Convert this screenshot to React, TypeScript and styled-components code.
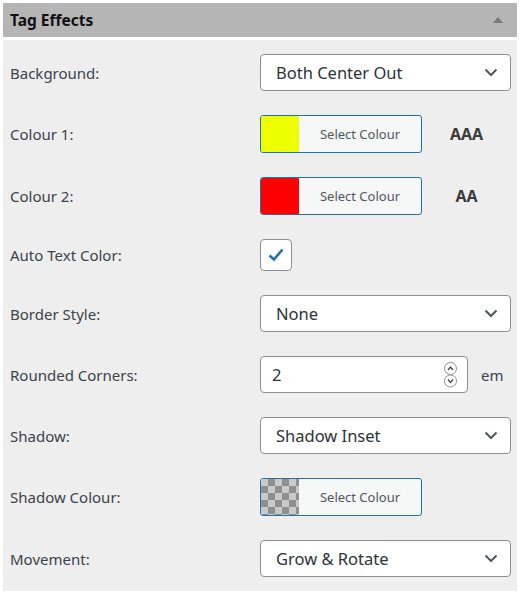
import React from 'react';
import styled, { createGlobalStyle } from 'styled-components';

const GlobalStyle = createGlobalStyle`
  html, body {
    margin: 0;
    padding: 0;
    background: #ffffff;
  }
  body {
    font-family: "Noto Sans", "Open Sans", sans-serif;
    color: #3c434a;
  }
`;

// Panel
const Panel = styled.div`
  width: 514px;
  margin: 3px 0 0 3px;
`;

const PanelHeader = styled.div`
  height: 34px;
  background: #b5b5b5;
  display: flex;
  align-items: center;
  justify-content: space-between;
  padding: 0 14px 0 7px;
  margin-bottom: 3px;
`;

const PanelTitle = styled.h2`
  margin: 0;
  font-size: 15.5px;
  font-weight: 700;
  color: #111111;
`;

const Toggle = styled.span`
  width: 0;
  height: 0;
  border-left: 5px solid transparent;
  border-right: 5px solid transparent;
  border-bottom: 6px solid #7a7a7a;
`;

const PanelBody = styled.div`
  background: #eeeeee;
  padding: 2px 6px 2px 7px;
`;

// Rows
const Row = styled.div`
  display: grid;
  grid-template-columns: 250px 1fr;
  align-items: center;
  padding: 12px 0;
`;

const Label = styled.label`
  font-size: 15px;
  line-height: 20px;
  color: #3c434a;
`;

const Control = styled.div`
  display: flex;
  align-items: center;
`;

// Select
const SelectBox = styled.div`
  flex: 1;
  height: 37px;
  box-sizing: border-box;
  background: #ffffff;
  border: 1px solid #8c8f94;
  border-radius: 4px;
  display: flex;
  align-items: center;
  justify-content: space-between;
  padding: 0 12px 0 15px;
  font-size: 16.5px;
  color: #2c3338;
`;

const Chevron = () => (
  <svg width="14" height="9" viewBox="0 0 14 9" fill="none">
    <path d="M1.5 1.5L7 7L12.5 1.5" stroke="#50575e" strokeWidth="2" />
  </svg>
);

const Select = ({ value }: { value: string }) => (
  <SelectBox>
    <span>{value}</span>
    <Chevron />
  </SelectBox>
);

// Colour picker
const ColourButton = styled.div`
  width: 162px;
  height: 38px;
  box-sizing: border-box;
  border: 1px solid #2271b1;
  border-radius: 3px;
  background: #f6f7f7;
  display: flex;
  overflow: hidden;
`;

const Swatch = styled.span<{ $colour?: string }>`
  width: 38px;
  flex-shrink: 0;
  background: ${p => p.$colour ?? 'transparent'};
  ${p =>
    !p.$colour &&
    `
    background-color: #c9c9c9;
    background-image:
      linear-gradient(45deg, #8f8f8f 25%, transparent 25%, transparent 75%, #8f8f8f 75%),
      linear-gradient(45deg, #8f8f8f 25%, transparent 25%, transparent 75%, #8f8f8f 75%);
    background-size: 14px 14px;
    background-position: 0 0, 7px 7px;
  `}
`;

const ColourText = styled.span`
  flex: 1;
  display: flex;
  align-items: center;
  justify-content: center;
  font-size: 13px;
  color: #50575e;
`;

const Contrast = styled.span`
  flex: 1;
  text-align: center;
  font-size: 16px;
  font-weight: 700;
  color: #3c3c3c;
`;

// Checkbox
const CheckBox = styled.span`
  width: 32px;
  height: 32px;
  box-sizing: border-box;
  background: #ffffff;
  border: 1px solid #8c8f94;
  border-radius: 4px;
  display: flex;
  align-items: center;
  justify-content: center;
`;

// Number input
const NumberBox = styled.div`
  width: 208px;
  height: 37px;
  box-sizing: border-box;
  background: #ffffff;
  border: 1px solid #8c8f94;
  border-radius: 4px;
  display: flex;
  align-items: center;
  justify-content: space-between;
  padding: 0 10px 0 11px;
  font-size: 16.5px;
  color: #2c3338;
`;

const Unit = styled.span`
  margin-left: 13px;
  font-size: 15px;
  color: #3c434a;
`;

const Spinner = () => (
  <svg width="13" height="26" viewBox="0 0 13 26" fill="none">
    <rect x="0.5" y="0.5" width="12" height="12" rx="6" stroke="#8c8f94" />
    <rect x="0.5" y="13" width="12" height="12" rx="6" stroke="#8c8f94" />
    <path d="M4 8L6.5 5L9 8" stroke="#3c434a" strokeWidth="1.2" />
    <path d="M4 17.5L6.5 20.5L9 17.5" stroke="#3c434a" strokeWidth="1.2" />
  </svg>
);

const ColourPicker = ({ colour }: { colour?: string }) => (
  <ColourButton>
    <Swatch $colour={colour} />
    <ColourText>Select Colour</ColourText>
  </ColourButton>
);

export default function App() {
  return (
    <>
      <GlobalStyle />
      <Panel>
        <PanelHeader>
          <PanelTitle>Tag Effects</PanelTitle>
          <Toggle />
        </PanelHeader>
        <PanelBody>
          <Row>
            <Label>Background:</Label>
            <Control>
              <Select value="Both Center Out" />
            </Control>
          </Row>
          <Row>
            <Label>Colour 1:</Label>
            <Control>
              <ColourPicker colour="#eeff00" />
              <Contrast>AAA</Contrast>
            </Control>
          </Row>
          <Row>
            <Label>Colour 2:</Label>
            <Control>
              <ColourPicker colour="#ff0000" />
              <Contrast>AA</Contrast>
            </Control>
          </Row>
          <Row>
            <Label>Auto Text Color:</Label>
            <Control>
              <CheckBox>
                <svg width="18" height="16" viewBox="0 0 18 16" fill="none">
                  <path d="M2.5 8.5L7 12.5L15.5 2.5" stroke="#2271b1" strokeWidth="2.6" />
                </svg>
              </CheckBox>
            </Control>
          </Row>
          <Row>
            <Label>Border Style:</Label>
            <Control>
              <Select value="None" />
            </Control>
          </Row>
          <Row>
            <Label>Rounded Corners:</Label>
            <Control>
              <NumberBox>
                <span>2</span>
                <Spinner />
              </NumberBox>
              <Unit>em</Unit>
            </Control>
          </Row>
          <Row>
            <Label>Shadow:</Label>
            <Control>
              <Select value="Shadow Inset" />
            </Control>
          </Row>
          <Row>
            <Label>Shadow Colour:</Label>
            <Control>
              <ColourPicker />
            </Control>
          </Row>
          <Row>
            <Label>Movement:</Label>
            <Control>
              <Select value="Grow & Rotate" />
            </Control>
          </Row>
        </PanelBody>
      </Panel>
    </>
  );
}
